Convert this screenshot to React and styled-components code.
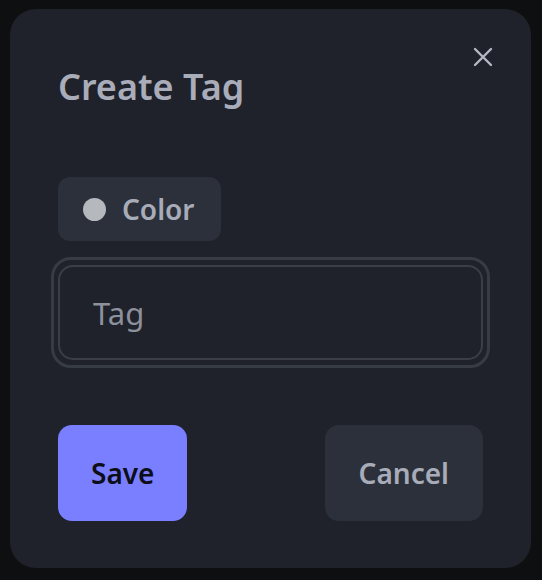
import styled, { createGlobalStyle } from 'styled-components'

const GlobalStyle = createGlobalStyle`
  html, body {
    margin: 0;
    padding: 0;
    background: #0e0f10;
    font-family: "Noto Sans", "Open Sans", sans-serif;
  }
`

const Page = styled.div`
  width: 542px;
  height: 580px;
  padding: 9px 11px 12px 10px;
  box-sizing: border-box;
  display: flex;
`

const Modal = styled.div`
  position: relative;
  flex: 1;
  background: #1f222a;
  border-radius: 26px;
  padding: 58px 48px 0 48px;
  display: flex;
  flex-direction: column;

  & > * {
    flex-shrink: 0;
  }
`

const CloseButton = styled.button`
  position: absolute;
  top: 33px;
  right: 33px;
  width: 30px;
  height: 30px;
  border: none;
  background: none;
  padding: 0;
  display: flex;
  align-items: center;
  justify-content: center;
  color: #b4b7c4;
`

const Title = styled.h2`
  margin: 0;
  font-size: 36px;
  line-height: 40px;
  font-weight: 600;
  color: #a9acb9;
`

const ColorButton = styled.button`
  margin-top: 70px;
  align-self: flex-start;
  height: 64px;
  padding: 0 26px 0 25px;
  border: none;
  border-radius: 12px;
  background: #2b303a;
  display: flex;
  align-items: center;
  gap: 16px;
  font-family: inherit;
  font-size: 28px;
  font-weight: 600;
  color: #a8abb8;
`

const Dot = styled.span`
  width: 23px;
  height: 23px;
  border-radius: 50%;
  background: ${p => p.$color};
`

const InputRing = styled.div`
  margin: 16px -7px 0;
  padding: 5px 4px;
  border: 3px solid #373b44;
  border-radius: 20px;
`

const Input = styled.input`
  box-sizing: border-box;
  width: 100%;
  height: 95px;
  border: 2px solid #3a3e48;
  border-radius: 15px;
  background: #1f222a;
  padding: 0 33px;
  font-family: inherit;
  font-size: 31px;
  color: #c0c3ce;
  outline: none;
  caret-color: #a8abb8;

  &::placeholder {
    color: #8d909d;
  }
`

const Actions = styled.div`
  margin-top: 57px;
  display: flex;
  justify-content: space-between;
`

const ActionButton = styled.button`
  height: 96px;
  padding: 0 ${p => p.$pad}px;
  border: none;
  border-radius: 14px;
  background: ${p => (p.$primary ? '#7a7fff' : '#2b303a')};
  color: ${p => (p.$primary ? '#0c0e1a' : '#a8abb8')};
  font-family: inherit;
  font-size: 28px;
  font-weight: 600;
`

export default function App() {
  return (
    <>
      <GlobalStyle />
      <Page>
        <Modal>
          <CloseButton aria-label="Close">
            <svg width="22" height="22" viewBox="0 0 22 22" fill="none" stroke="currentColor" strokeWidth="2.4" strokeLinecap="round">
              <path d="M3 3 L19 19 M19 3 L3 19" />
            </svg>
          </CloseButton>
          <Title>Create Tag</Title>
          <ColorButton>
            <Dot $color="#b5b8bc" />
            Color
          </ColorButton>
          <InputRing>
            <Input placeholder="Tag" autoFocus />
          </InputRing>
          <Actions>
            <ActionButton $primary $pad={33}>Save</ActionButton>
            <ActionButton $pad={34}>Cancel</ActionButton>
          </Actions>
        </Modal>
      </Page>
    </>
  )
}
